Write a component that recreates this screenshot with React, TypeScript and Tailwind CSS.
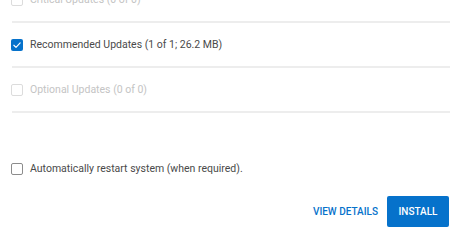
import React from 'react';

type RowProps = {
  label: string;
  checked?: boolean;
  disabled?: boolean;
};

function Checkbox({ checked, disabled }: { checked?: boolean; disabled?: boolean }) {
  if (checked) {
    return (
      <span className="flex h-[12px] w-[12px] shrink-0 items-center justify-center rounded-[2px] bg-[#0672cb]">
        <svg viewBox="0 0 12 12" className="h-[10px] w-[10px]" fill="none">
          <path d="M2.2 6.3 4.8 8.8 9.8 3.4" stroke="white" strokeWidth="1.4" strokeLinecap="round" strokeLinejoin="round" />
        </svg>
      </span>
    );
  }
  return (
    <span
      className={
        disabled
          ? 'h-[12px] w-[12px] shrink-0 rounded-[2px] border border-[#dcdcdc]'
          : 'h-[12px] w-[12px] shrink-0 rounded-[2px] border border-[#8c8c8c]'
      }
    />
  );
}

function UpdateRow({ label, checked, disabled }: RowProps) {
  return (
    <div className="flex h-[43px] items-center gap-[7px] pl-[11px]">
      <Checkbox checked={checked} disabled={disabled} />
      <span className={disabled ? 'text-[#c4c4c4]' : 'text-[#4a4a4a]'}>{label}</span>
    </div>
  );
}

export default function App() {
  return (
    <div className="h-[241px] w-[474px] overflow-hidden bg-white font-['Roboto',sans-serif] text-[10.5px]">
      <div className="mt-[-22px] w-[450px]">
        <UpdateRow label="Critical Updates (0 of 0)" disabled />
        <div className="ml-[12px] h-[2px] bg-[#ededed]" />
        <UpdateRow label="Recommended Updates (1 of 1; 26.2 MB)" checked />
        <div className="ml-[12px] h-[2px] bg-[#ededed]" />
        <UpdateRow label="Optional Updates (0 of 0)" disabled />
        <div className="ml-[12px] h-[2px] bg-[#ededed]" />

        <div className="mt-[34px] flex h-[43px] items-center gap-[7px] pl-[11px]">
          <Checkbox />
          <span className="text-[#4a4a4a]">Automatically restart system (when required).</span>
        </div>

        <div className="mt-[6px] flex items-center justify-end gap-[8px] pr-[1px]">
          <button className="px-[1px] text-[10px] font-medium text-[#0672cb]">VIEW DETAILS</button>
          <button className="h-[31px] w-[62px] rounded-[2px] bg-[#0672cb] text-[10px] font-medium text-white">
            INSTALL
          </button>
        </div>
      </div>
    </div>
  );
}
